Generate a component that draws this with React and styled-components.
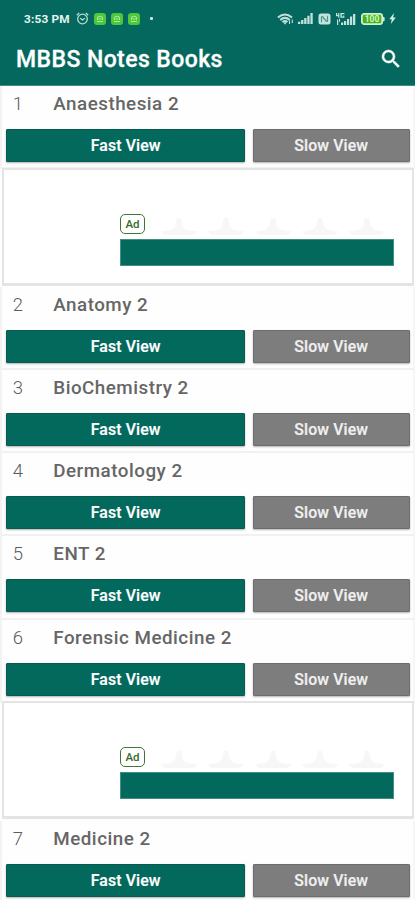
import React from "react";
import styled, { createGlobalStyle } from "styled-components";
import { MdSearch } from "react-icons/md";

const GlobalStyle = createGlobalStyle`
  * {
    box-sizing: border-box;
  }

  body {
    margin: 0;
    background-color: #fff;
    font-family: Roboto, "Liberation Sans", sans-serif;
    overflow: hidden;
  }
`;

const Screen = styled.div`
  width: 415px;
  height: 900px;
  overflow: hidden;
  background-color: #fefefe;
`;

const Header = styled.header`
  height: 86px;
  background-color: #05685e;
  color: #fff;
  border-bottom: 1px solid #438a80;
`;

const StatusBar = styled.div`
  height: 37px;
  padding: 0 19px 0 24px;
  display: flex;
  align-items: center;
  justify-content: space-between;
`;

const StatusGroup = styled.div`
  display: flex;
  align-items: center;
  gap: ${(props) => props.gap};
`;

const Clock = styled.span`
  width: 47px;
  font-size: 11.8px;
  font-weight: 700;
  letter-spacing: 0.2px;
  color: #e4f4f0;
  white-space: nowrap;
`;

const AppBadge = styled.span`
  width: 12px;
  height: 12px;
  border-radius: 3px;
  background-color: #4cc83a;
  display: flex;
  align-items: center;
  justify-content: center;
`;

const Dot = styled.span`
  width: 3px;
  height: 3px;
  margin-left: 5px;
  border-radius: 1px;
  background-color: #c5e5df;
`;

const TitleBar = styled.div`
  height: 45px;
  padding: 0 14px 0 16px;
  display: flex;
  align-items: center;
  justify-content: space-between;
`;

const Title = styled.h1`
  margin: 0;
  font-size: 23px;
  font-weight: 500;
  letter-spacing: 0.42px;
  -webkit-text-stroke: 0.3px #fff;
`;

const SearchIcon = styled(MdSearch)`
  width: 24px;
  height: 24px;
  margin: 0 -2px 2px 0;

  path:last-child {
    stroke: #fff;
    stroke-width: 0.5px;
  }
`;

const Item = styled.section`
  height: 83.1px;
  padding: 0 3.5px 0 4.3px;
  border-left: 2px solid #f3f3f3;
  border-right: 2px solid #f6f6f6;
  border-bottom: 2px solid #f1f1f1;
`;

const ItemHead = styled.div`
  height: 43px;
  display: flex;
  align-items: flex-start;
  padding: 7px 0 0 6.5px;
  line-height: 22px;
`;

const Index = styled.span`
  width: 40.5px;
  font-size: 18.5px;
  font-weight: 300;
  color: #5c5c5c;
`;

const Name = styled.span`
  font-size: 18.8px;
  font-weight: 500;
  letter-spacing: 0.5px;
  color: #666;
`;

const Actions = styled.div`
  display: grid;
  grid-template-columns: 238.7px 156.5px;
  justify-content: space-between;
`;

const Button = styled.button`
  height: 33px;
  padding: 0;
  border: 1px solid ${(props) => (props.$slow ? "#6d6d6d" : "#075b50")};
  border-radius: 1px;
  background-color: ${(props) => (props.$slow ? "#7d7d7d" : "#04695d")};
  box-shadow: 0 1px 2px rgba(0, 0, 0, 0.3);
  color: ${(props) => (props.$slow ? "#f0f0f0" : "#fff")};
  font-family: inherit;
  font-size: 15.8px;
  font-weight: 500;
  letter-spacing: 0.15px;
  line-height: 32px;
  -webkit-text-stroke: 0.2px currentColor;
`;

const AdCard = styled.section`
  height: 118.1px;
  margin: -1.3px 1px 1.3px 2px;
  padding: 44px 18px 0 116px;
  border: 2px solid #e4e4e4;
  border-bottom-width: 3px;
  background-color: #fff;
`;

const AdInfo = styled.div`
  height: 25px;
  display: flex;
  align-items: flex-start;
`;

const AdLabel = styled.span`
  width: 25px;
  height: 20px;
  border: 1.5px solid #43753a;
  border-radius: 5px;
  color: #356b26;
  font-size: 11.5px;
  font-weight: 500;
  line-height: 19px;
  text-align: center;
`;

const Stars = styled.div`
  display: flex;
  gap: 9px;
  margin: 4px 0 0 15px;
`;

const AdButton = styled.div`
  height: 27px;
  border: 1px solid #428f80;
  background-color: #04695d;
`;

const AlarmIcon = () => (
  <svg width="13" height="13" viewBox="0 0 13 13" fill="none" stroke="#b9ded6" strokeWidth="1.3">
    <circle cx="6.5" cy="7" r="4.8" />
    <path d="M0.8 3.2 3.2 1M12.2 3.2 9.8 1M4.2 6.2l2.3 1.7 2.3-1.7" />
  </svg>
);

const BadgeGlyph = () => (
  <svg width="8" height="8" viewBox="0 0 8 8" fill="none" stroke="#a9eb9a" strokeWidth="1.1">
    <path d="M1 6.5h6M1.5 5V3.2Q1.5 1.2 4 1.2T6.5 3.2V5M2.5 4h3" />
  </svg>
);

const WifiIcon = () => (
  <svg width="17" height="12" viewBox="0 0 17 12" fill="none" stroke="#bfe0da" strokeWidth="2">
    <path d="M0.9 4.6Q8 -1.5 15 4.6M3.2 6.9Q8 2.9 12.7 6.9M5.4 9Q8 7 10.5 9" />
    <path d="M6.2 9.3h3.6L8 11.7z" fill="#bfe0da" stroke="none" />
    <path d="M12.5 11V7.5M15.3 6.5V10" strokeWidth="1.1" />
  </svg>
);

const SignalIcon = () => (
  <svg width="15" height="11" viewBox="0 0 15 11" fill="#c2e2dc">
    <path d="M0 8.7h2.3V11H0zM3.1 7h2.3v4H3.1zM6.2 5h2.3v6H6.2zM9.3 2.7h2.3V11H9.3zM12.4 0h2.3v11h-2.3z" />
  </svg>
);

const NfcIcon = () => (
  <svg width="13" height="12" viewBox="0 0 13 12">
    <rect x="0.5" y="0.5" width="12" height="11" rx="2.5" fill="#c5e3dd" />
    <path d="M3.5 9.3V4.2Q3.5 3 4.7 3.8L8.3 8.2Q9.5 9 9.5 7.8V2.8" fill="none" stroke="#4b978c" strokeWidth="1.2" />
  </svg>
);

const DataSignalIcon = () => (
  <svg width="21" height="12" viewBox="0 0 21 12" fill="#c2e2dc">
    <path d="M6 9.5h2.2V12H6zM9 8h2.2v4H9zM12 6h2.2v6H12zM15 3.5h2.2V12H15zM18 1h2.3v11H18z" />
    <path d="M1 0h1.2v2h1V0h1.2v4.7H3.2V3.2H1zM5.4 0h4v1.2H6.8v2.3h1.4v-1h1.2v2.2h-4zM2 6.5h1.2V12H2zM4 5.7h1v3H4z" />
  </svg>
);

const BatteryIcon = () => (
  <svg width="24" height="12" viewBox="0 0 24 12">
    <rect x="0.6" y="0.6" width="20.8" height="10.8" rx="2.6" fill="#a9dc93" stroke="#d7eed6" strokeWidth="1.2" />
    <rect x="2" y="2" width="18" height="8" rx="1" fill="#45b419" />
    <path d="M22 3.5q1.8 0 1.8 2.5T22 8.5z" fill="#c9e6df" />
    <text x="11" y="9" textAnchor="middle" fontSize="8.5" fontWeight="700" fill="#d4f5c7">
      100
    </text>
  </svg>
);

const BoltIcon = () => (
  <svg width="7" height="11" viewBox="0 0 7 11">
    <path d="M5 0 0.3 6.2h2.5L1.8 11l5-6.5H4.1z" fill="#d5ece8" />
  </svg>
);

const StarIcon = () => (
  <svg width="38" height="17" viewBox="0 0 38 17">
    <path d="M17 0h4l2 9 4 3 11 1.5L33 17H5l-5-3.500L11 12l4-3z" fill="#f7f7f7" />
  </svg>
);

const entries = [
  { id: 1, name: "Anaesthesia 2", ad: true },
  { id: 2, name: "Anatomy 2" },
  { id: 3, name: "BioChemistry 2" },
  { id: 4, name: "Dermatology 2" },
  { id: 5, name: "ENT 2" },
  { id: 6, name: "Forensic Medicine 2", ad: true },
  { id: 7, name: "Medicine 2" },
];

const Ad = () => (
  <AdCard>
    <AdInfo>
      <AdLabel>Ad</AdLabel>
      <Stars>
        {[1, 2, 3, 4, 5].map((star) => (
          <StarIcon key={star} />
        ))}
      </Stars>
    </AdInfo>
    <AdButton />
  </AdCard>
);

const App = () => {
  return (
    <>
      <GlobalStyle />
      <Screen>
        <Header>
          <StatusBar>
            <StatusGroup gap="5px">
              <Clock>3:53 PM</Clock>
              <AlarmIcon />
              {[1, 2, 3].map((badge) => (
                <AppBadge key={badge}>
                  <BadgeGlyph />
                </AppBadge>
              ))}
              <Dot />
            </StatusGroup>
            <StatusGroup gap="4.4px">
              <WifiIcon />
              <SignalIcon />
              <NfcIcon />
              <DataSignalIcon />
              <BatteryIcon />
              <BoltIcon />
            </StatusGroup>
          </StatusBar>
          <TitleBar>
            <Title>MBBS Notes Books</Title>
            <SearchIcon />
          </TitleBar>
        </Header>
        {entries.map((entry) => (
          <React.Fragment key={entry.id}>
            <Item>
              <ItemHead>
                <Index>{entry.id}</Index>
                <Name>{entry.name}</Name>
              </ItemHead>
              <Actions>
                <Button>Fast View</Button>
                <Button $slow>Slow View</Button>
              </Actions>
            </Item>
            {entry.ad && <Ad />}
          </React.Fragment>
        ))}
      </Screen>
    </>
  );
};

export default App;
